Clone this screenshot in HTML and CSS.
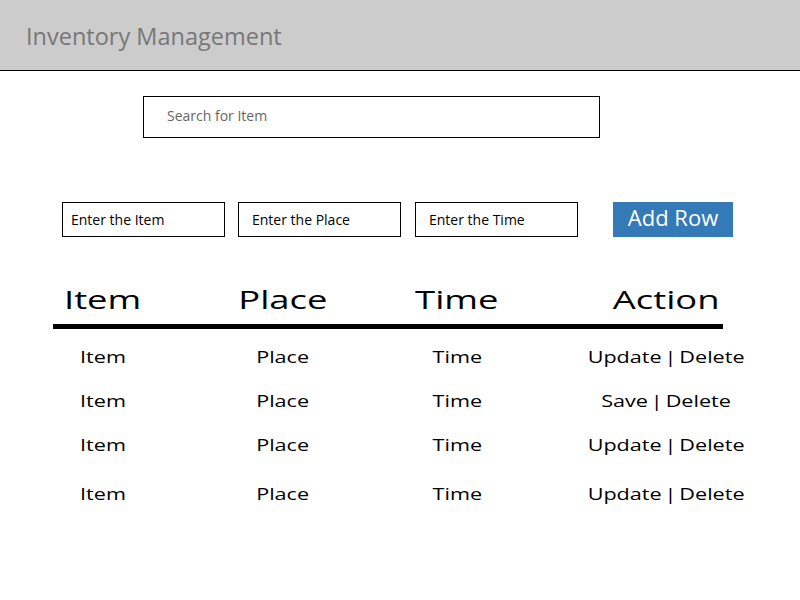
FILE: index.html
```html
<!DOCTYPE html>
<html>
<head>
<meta charset="utf-8">
<title>Inventory Management</title>
<link rel="stylesheet" href="styles.css">
</head>
<body>
<header class="topbar">
  <h1 class="title">Inventory Management</h1>
</header>
<main class="content">
  <div class="search">
    <input class="search-input" type="text" placeholder="Search for Item">
  </div>
  <div class="form-row">
    <input class="field field-item" type="text" placeholder="Enter the Item">
    <input class="field field-place" type="text" placeholder="Enter the Place">
    <input class="field field-time" type="text" placeholder="Enter the Time">
    <button class="add-btn" type="button">Add Row</button>
  </div>
  <div class="table">
    <div class="thead">
      <div class="cell"><span class="hw">Item</span></div>
      <div class="cell"><span class="hw">Place</span></div>
      <div class="cell"><span class="hw">Time</span></div>
      <div class="cell"><span class="hw">Action</span></div>
    </div>
    <div class="rule"></div>
    <div class="tbody">
      <div class="row">
        <div class="cell"><span class="rw">Item</span></div>
        <div class="cell"><span class="rw">Place</span></div>
        <div class="cell"><span class="rw">Time</span></div>
        <div class="cell"><span class="rw act">Update | Delete</span></div>
      </div>
      <div class="row">
        <div class="cell"><span class="rw">Item</span></div>
        <div class="cell"><span class="rw">Place</span></div>
        <div class="cell"><span class="rw">Time</span></div>
        <div class="cell"><span class="rw act">Save | Delete</span></div>
      </div>
      <div class="row">
        <div class="cell"><span class="rw">Item</span></div>
        <div class="cell"><span class="rw">Place</span></div>
        <div class="cell"><span class="rw">Time</span></div>
        <div class="cell"><span class="rw act">Update | Delete</span></div>
      </div>
      <div class="row row-last">
        <div class="cell"><span class="rw">Item</span></div>
        <div class="cell"><span class="rw">Place</span></div>
        <div class="cell"><span class="rw">Time</span></div>
        <div class="cell"><span class="rw act">Update | Delete</span></div>
      </div>
    </div>
  </div>
</main>
</body>
</html>
```

FILE: styles.css
```css
* { box-sizing: border-box; }
html, body { margin: 0; padding: 0; background: #fff; }
body { font-family: "Open Sans", "Liberation Sans", sans-serif; color: #000; }

.topbar {
  height: 71px;
  background: #cccccc;
  border-bottom: 1px solid #000;
  display: flex;
  align-items: center;
  padding-left: 26px;
}
.title {
  margin: 0;
  font-weight: 400;
  font-size: 23.5px;
  color: #777;
  line-height: 1;
  padding-top: 4px;
}

.content { display: flex; flex-direction: column; }

.search { padding: 25px 0 0 143px; }
.search-input {
  display: block;
  width: 457px;
  height: 42px;
  border: 1px solid #000;
  padding: 0 0 4px 23px;
  font-family: inherit;
  font-size: 14px;
  color: #555;
  outline: none;
}
.search-input::placeholder { color: #666; }

.form-row {
  display: flex;
  align-items: center;
  padding: 64px 0 0 62px;
}
.field {
  width: 163px;
  height: 35px;
  margin: 0;
  border: 1px solid #000;
  padding: 0 0 0 8px;
  font-family: inherit;
  font-size: 14px;
  color: #000;
  outline: none;
}
.field::placeholder { color: #000; }
.field-item { margin-right: 13px; }
.field-place { margin-right: 14px; padding-left: 13px; }
.field-time { margin-right: 35px; padding-left: 13px; }
.add-btn {
  width: 120px;
  height: 35px;
  margin: 0;
  border: 0;
  background: #337ab7;
  color: #fff;
  font-family: inherit;
  font-size: 22px;
  padding: 0 0 5px 0;
  line-height: 1;
}

.table { padding-top: 43px; }
.thead, .row {
  display: grid;
  grid-template-columns: 180px 180px 168px 250px;
  padding-left: 13px;
  align-items: center;
}
.thead { height: 40px; }
.cell { text-align: center; }
.hw {
  display: inline-block;
  font-size: 26px;
  line-height: 1;
  transform: scaleX(1.4);
}
.rule {
  margin: 4px 0 0 53px;
  width: 670px;
  height: 5px;
  background: #000;
}
.tbody { padding-top: 6px; }
.row { height: 44px; }
.row-last { margin-top: 5px; }
.rw {
  display: inline-block;
  font-size: 16px;
  line-height: 1;
  transform: scaleX(1.35);
}
.act { word-spacing: -2px; }
```
